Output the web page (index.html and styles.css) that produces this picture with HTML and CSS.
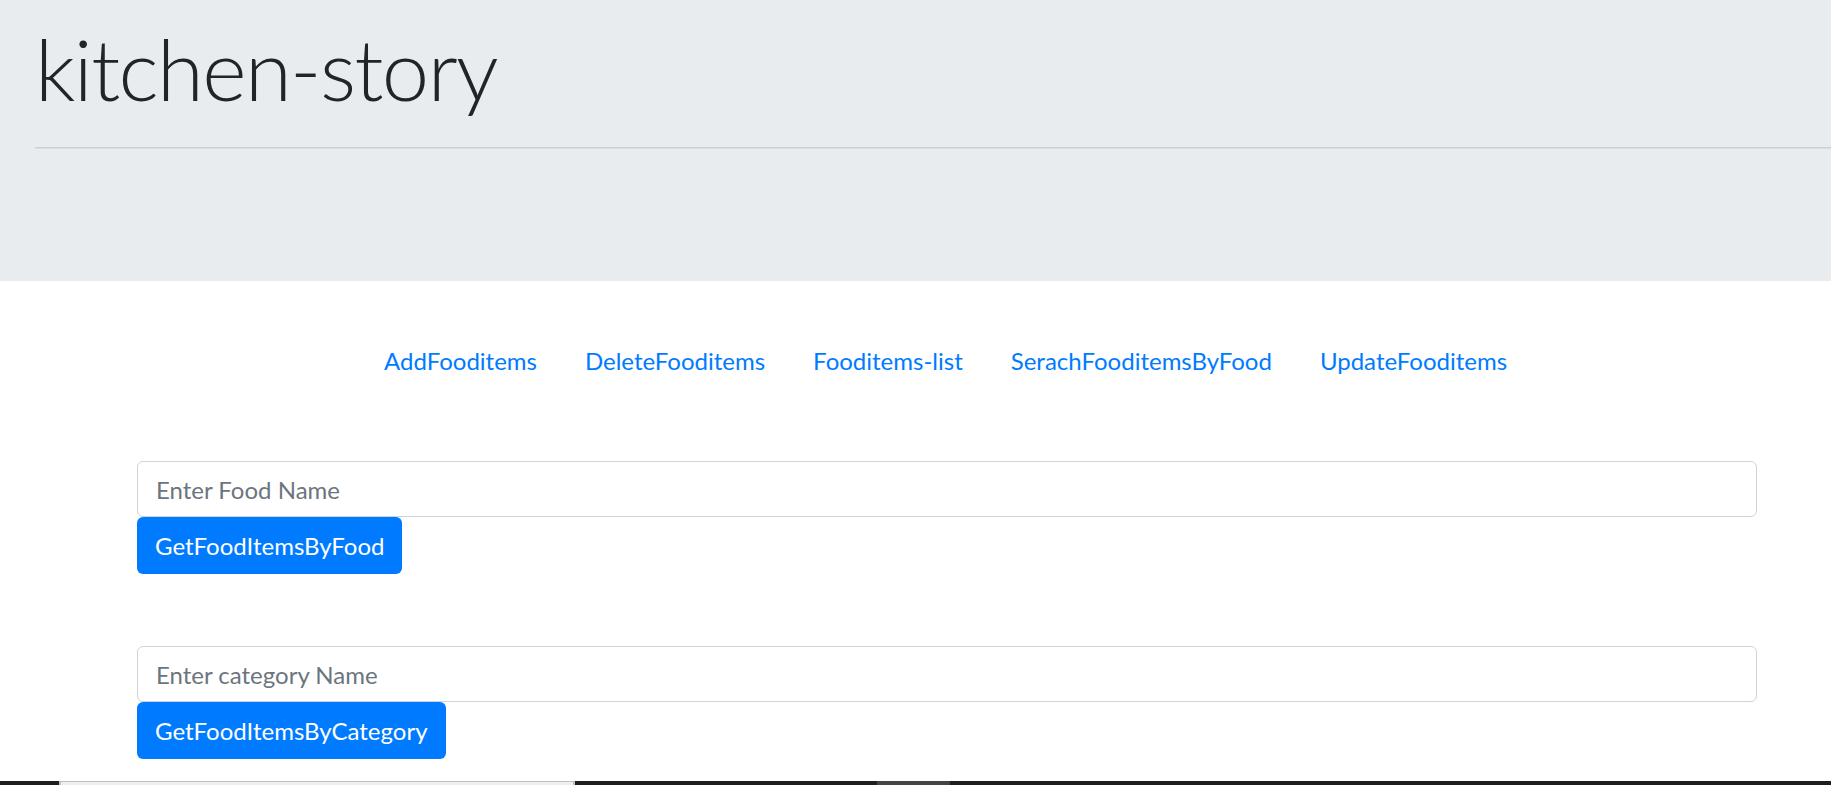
FILE: index.html
```html
<!DOCTYPE html>
<html lang="en">
<head>
<meta charset="utf-8">
<title>kitchen-story</title>
<link rel="stylesheet" href="styles.css">
</head>
<body>
<header class="jumbotron">
  <h1 class="display">kitchen-story</h1>
  <hr class="rule">
</header>
<nav class="nav">
  <ul class="nav-list">
    <li><a class="nav-link" href="#">AddFooditems</a></li>
    <li><a class="nav-link" href="#">DeleteFooditems</a></li>
    <li><a class="nav-link" href="#">Fooditems-list</a></li>
    <li><a class="nav-link" href="#">SerachFooditemsByFood</a></li>
    <li><a class="nav-link" href="#">UpdateFooditems</a></li>
  </ul>
</nav>
<main class="forms">
  <div class="search">
    <input class="field" type="text" placeholder="Enter Food Name">
    <button class="btn" type="button">GetFoodItemsByFood</button>
  </div>
  <div class="search">
    <input class="field" type="text" placeholder="Enter category Name">
    <button class="btn" type="button">GetFoodItemsByCategory</button>
  </div>
</main>
<div class="taskbar">
  <span class="tb-gap-a"></span>
  <span class="tb-light"></span>
  <span class="tb-gap-b"></span>
  <span class="tb-mid"></span>
  <span class="tb-rest"></span>
</div>
</body>
</html>
```
FILE: styles.css
```css
html, body {
  margin: 0;
  padding: 0;
  overflow: hidden;
}
body {
  font-family: "Lato", "Open Sans", "Liberation Sans", sans-serif;
  font-size: 24px;
  line-height: 1.5;
  color: #212529;
  background: #ffffff;
  height: 785px;
}
.jumbotron {
  box-sizing: border-box;
  height: 281px;
  background: #e9ecef;
  padding: 17px 0 0 35px;
}
.display {
  margin: 0;
  font-size: 85px;
  font-weight: 300;
  letter-spacing: -1.6px;
  line-height: 1.2;
  color: #212529;
}
.rule {
  margin: 28px 0 0 0;
  height: 0;
  border: 0;
  border-top: 1px solid #ccd0d3;
  border-bottom: 1px solid #dcdfe2;
}
.nav {
  margin-top: 50px;
}
.nav-list {
  display: flex;
  justify-content: center;
  list-style: none;
  margin: 0;
  padding: 0 0 0 60px;
}
.nav-link {
  display: block;
  padding: 12px 24px;
  line-height: 36px;
  color: #007bff;
  text-decoration: none;
}
.forms {
  margin-top: 70px;
  padding: 0 74px 0 137px;
  display: flex;
  flex-direction: column;
  gap: 72px;
}
.search {
  display: flex;
  flex-direction: column;
  align-items: flex-start;
}
.field {
  box-sizing: border-box;
  display: block;
  width: 100%;
  height: 56px;
  margin: 0;
  padding: 0 18px;
  font-family: inherit;
  font-size: 24px;
  color: #495057;
  background: #fff;
  border: 1px solid #d0d4d8;
  border-radius: 6px;
  outline: none;
}
.field::placeholder {
  color: #6c757d;
  opacity: 1;
}
.btn {
  box-sizing: border-box;
  height: 57px;
  margin: 0;
  padding: 0 18px;
  font-family: inherit;
  font-size: 24px;
  line-height: 36px;
  color: #fff;
  background: #007bff;
  border: 0;
  border-radius: 6px;
}
.taskbar {
  position: fixed;
  left: 0;
  right: 0;
  bottom: 0;
  height: 4px;
  display: flex;
  background: #1e1e1e;
}
.tb-gap-a { width: 59px; }
.tb-light {
  box-sizing: border-box;
  width: 516px;
  background: #efefef;
  border-top: 1px solid #c0c0c0;
  border-left: 2px solid #c0c0c0;
  border-right: 2px solid #c0c0c0;
}
.tb-gap-b { width: 302px; }
.tb-mid {
  width: 73px;
  background: #444444;
}
.tb-rest { flex: 1; }
```
